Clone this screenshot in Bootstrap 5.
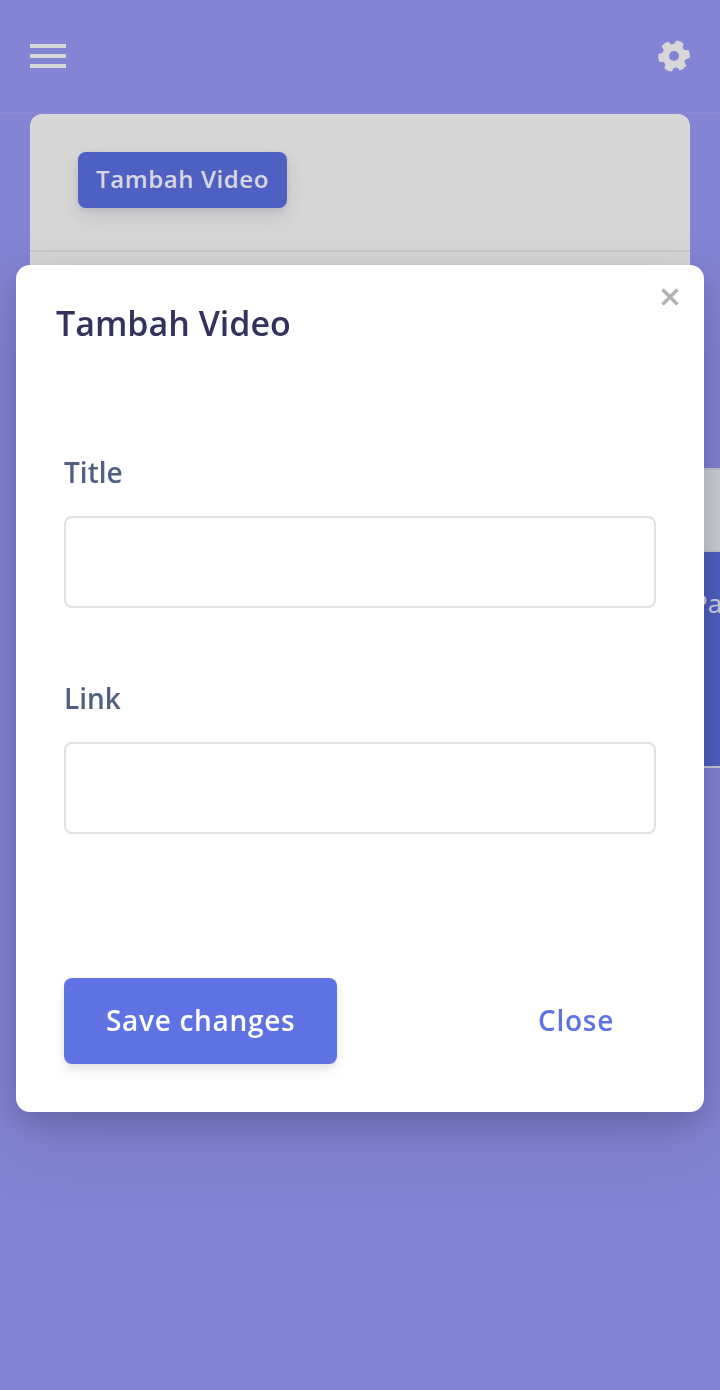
<!DOCTYPE html>
<html lang="id">
<head>
<meta charset="utf-8">
<meta name="viewport" content="width=device-width, initial-scale=1">
<title>Tambah Video</title>
<link href="https://cdn.jsdelivr.net/npm/bootstrap@5.3.0/dist/css/bootstrap.min.css" rel="stylesheet">
<style>
body{background:#8484d6;font-family:"Open Sans",sans-serif;height:1390px;overflow:hidden}
.topbar{height:114px;padding:0 29px 0 30px;border-bottom:2px solid #8a89d5}
.burger{width:36px;height:24px}
.burger i{height:4px;background:#d7d7d7}
.video-card{--bs-card-border-width:0;--bs-card-border-radius:12px;margin:0 30px;height:900px;background:linear-gradient(#d7d7d7 0 300px,transparent 300px)}
.video-card .card-header{height:138px;padding:38px 48px;background:none;border-bottom:2px solid #cacacb}
.btn-add{height:56px;padding:0 18px;font-size:24px;font-weight:600;letter-spacing:.6px;line-height:53px;border:0;border-radius:8px;background:#4e60c2!important;color:#d7d9e2!important;box-shadow:0 8px 18px rgba(50,50,93,.13),0 2px 6px rgba(0,0,0,.07)}
.btn-add,.btn-save,.btn-shut{display:flex;align-items:flex-start}
.video-table{margin:216px -30px 0 48px}
.head-row{height:84px;background:#d4d4d8;border-top:2px solid #c8c8ce;border-bottom:2px solid #c8c8ce}
.item-row{height:216px;background:#4e60c2;border-bottom:2px solid #cccdd9;color:#d3d6e5;font-size:26px;padding:32px 0 0 614px;white-space:nowrap}
.modal-dialog{max-width:none;margin:265px 16px 0}
.modal-content{height:847px;border:0;border-radius:14px;box-shadow:0 30px 70px rgba(50,50,93,.2),0 10px 30px rgba(0,0,0,.17)}
.modal-header{height:119px;padding:40px;border:0}
.modal-title{font-size:34px;line-height:37px;font-weight:600;color:#32325d}
.dismiss{top:23px;right:25px;width:18px;height:18px;line-height:0}
.modal-body{padding:67px 48px 0}
.form-label{font-size:28px;line-height:42px;font-weight:600;color:#525f7f;margin-bottom:23px;margin-top:0}
.form-control{height:92px;border:2px solid #dee2e6;border-radius:8px}
.field{height:226px}
.modal-footer{height:182px;padding:48px;border:0}
.modal-footer .btn{height:86px;font-size:28px;font-weight:600;letter-spacing:.7px;border:0;border-radius:8px;line-height:85px;padding:0 42px}
.btn-save{background:#5e72e4!important;color:#fff!important;box-shadow:0 8px 12px rgba(50,50,93,.08),0 2px 6px rgba(0,0,0,.06)}
.btn-shut{color:#5e72e4!important}
</style>
</head>
<body>
<nav class="topbar d-flex justify-content-between align-items-center">
  <div class="burger d-flex flex-column justify-content-between"><i></i><i></i><i></i></div>
  <svg class="gear" width="34" height="34" viewBox="-17 -17 34 34" fill="#d7d7d7">
    <defs><mask id="hub"><rect x="-17" y="-17" width="34" height="34" fill="#fff"/><circle r="5" fill="#000"/></mask>
    <path id="tooth" d="M-5 -9L-3.9 -15.3Q0 -16.4 3.9 -15.3L5 -9z"/></defs>
    <g mask="url(#hub)"><g transform="rotate(-7)"><circle r="11.9"/>
    <use href="#tooth" transform="rotate(30)"/><use href="#tooth" transform="rotate(90)"/><use href="#tooth" transform="rotate(150)"/><use href="#tooth" transform="rotate(210)"/><use href="#tooth" transform="rotate(270)"/><use href="#tooth" transform="rotate(330)"/></g></g>
  </svg>
</nav>
<main class="card video-card">
  <div class="card-header"><button class="btn btn-primary btn-add">Tambah Video</button></div>
  <div class="video-table"><div class="head-row"></div><div class="item-row">Pa</div></div>
</main>
<div class="modal show d-block overflow-hidden" tabindex="-1" role="dialog">
  <div class="modal-dialog">
    <div class="modal-content">
      <div class="modal-header align-items-start">
        <h5 class="modal-title">Tambah Video</h5>
        <button class="dismiss position-absolute border-0 bg-transparent p-0" aria-label="Close"><svg width="18" height="18" viewBox="0 0 18 18" stroke="#b2b2b2" stroke-width="3.5"><path d="M1.5 1.5l15 15M16.5 1.5l-15 15"/></svg></button>
      </div>
      <div class="modal-body">
        <div class="field"><label class="form-label d-block" for="title">Title</label><input class="form-control" id="title" type="text"></div>
        <div class="field"><label class="form-label d-block" for="link">Link</label><input class="form-control" id="link" type="text"></div>
      </div>
      <div class="modal-footer justify-content-between align-items-start">
        <button class="btn btn-primary btn-save m-0">Save changes</button>
        <button class="btn btn-link btn-shut text-decoration-none m-0">Close</button>
      </div>
    </div>
  </div>
</div>
<script src="https://cdn.jsdelivr.net/npm/bootstrap@5.3.0/dist/js/bootstrap.bundle.min.js"></script>
</body>
</html>
